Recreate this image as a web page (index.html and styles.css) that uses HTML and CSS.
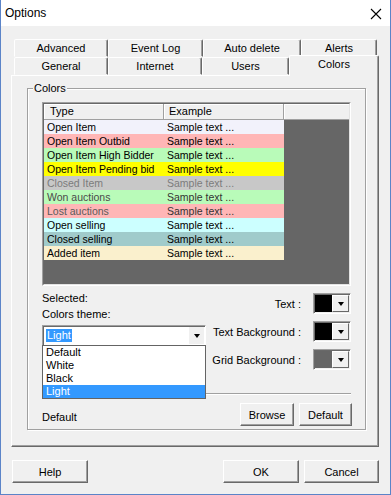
FILE: index.html
```html
<!DOCTYPE html>
<html lang="en">
<head>
  <meta charset="UTF-8">
  <title>Options</title>
  <link rel="stylesheet" href="styles.css">
</head>
<body>
  <div class="window">
    <div class="titlebar">
      <span class="title">Options</span>
      <svg class="close" width="12" height="12" viewBox="0 0 12 12">
        <path d="M1 1 L11 11 M11 1 L1 11" stroke="#000" stroke-width="1.1" fill="none"/>
      </svg>
    </div>

    <div class="content">
      <div class="tabs">
        <div class="tab-row">
          <div class="tab w94">Advanced</div>
          <div class="tab w95">Event Log</div>
          <div class="tab w98">Auto delete</div>
          <div class="tab w76">Alerts</div>
        </div>
        <div class="tab-row">
          <div class="tab w94">General</div>
          <div class="tab w94">Internet</div>
          <div class="tab w87">Users</div>
          <div class="tab active">Colors</div>
        </div>
      </div>

      <div class="panel">
        <div class="group">
          <span class="legend">Colors</span>

          <div class="listview">
            <div class="grid">
              <div class="grid-head">
                <div class="hcell col-type">Type</div>
                <div class="hcell col-example">Example</div>
                <div class="hcell col-fill"></div>
              </div>
              <div class="row r-open"><span class="col-type">Open Item</span><span class="col-example">Sample text ...</span></div>
              <div class="row r-outbid"><span class="col-type">Open Item Outbid</span><span class="col-example">Sample text ...</span></div>
              <div class="row r-high"><span class="col-type">Open Item High Bidder</span><span class="col-example">Sample text ...</span></div>
              <div class="row r-pending"><span class="col-type">Open Item Pending bid</span><span class="col-example">Sample text ...</span></div>
              <div class="row r-closed"><span class="col-type">Closed Item</span><span class="col-example">Sample text ...</span></div>
              <div class="row r-won"><span class="col-type">Won auctions</span><span class="col-example">Sample text ...</span></div>
              <div class="row r-lost"><span class="col-type">Lost auctions</span><span class="col-example">Sample text ...</span></div>
              <div class="row r-selling"><span class="col-type">Open selling</span><span class="col-example">Sample text ...</span></div>
              <div class="row r-sold"><span class="col-type">Closed selling</span><span class="col-example">Sample text ...</span></div>
              <div class="row r-added"><span class="col-type">Added item</span><span class="col-example">Sample text ...</span></div>
            </div>
          </div>

          <div class="settings">
            <div class="theme">
              <div class="label">Selected:</div>
              <div class="label gap">Colors theme:</div>
              <div class="combo">
                <span class="combo-value">Light</span>
                <span class="combo-btn"><span class="arrow"></span></span>
                <div class="dropdown">
                  <div class="opt">Default</div>
                  <div class="opt">White</div>
                  <div class="opt">Black</div>
                  <div class="opt selected">Light</div>
                </div>
              </div>
            </div>
            <div class="pickers">
              <div class="picker">
                <span class="picker-label">Text :</span>
                <span class="swatch"><span class="swatch-color black"></span><span class="swatch-btn"><span class="arrow"></span></span></span>
              </div>
              <div class="picker">
                <span class="picker-label">Text Background :</span>
                <span class="swatch"><span class="swatch-color black"></span><span class="swatch-btn"><span class="arrow"></span></span></span>
              </div>
              <div class="picker">
                <span class="picker-label">Grid Background :</span>
                <span class="swatch"><span class="swatch-color gray"></span><span class="swatch-btn"><span class="arrow"></span></span></span>
              </div>
            </div>
          </div>

          <div class="separator"></div>

          <div class="group-footer">
            <span class="theme-name">Default</span>
            <button class="btn w54">Browse</button>
            <button class="btn w53">Default</button>
          </div>
        </div>
      </div>

      <div class="buttons">
        <button class="btn w76">Help</button>
        <span class="spacer"></span>
        <button class="btn w76">OK</button>
        <button class="btn w75">Cancel</button>
      </div>
    </div>
  </div>
</body>
</html>
```

FILE: styles.css
```css
* {
  box-sizing: border-box;
}
body {
  margin: 0;
  padding: 0;
  background: #ffffff;
  font-family: 'Liberation Sans', Arial, sans-serif;
  font-size: 11px;
  color: #000;
}
.window {
  width: 391px;
  height: 495px;
  border: 1px solid #5b84c8;
  border-top: none;
  background: #f0f0f0;
}
.titlebar {
  height: 26px;
  background: #fff;
  display: flex;
  align-items: center;
  justify-content: space-between;
  padding: 0 8px 0 4px;
}
.title {
  font-size: 12px;
}
.close {
  margin-top: 1px;
}
.content {
  padding: 13px 0 0 10px;
}

/* tabs */
.tabs {
  padding-left: 3px;
}
.tab-row {
  display: flex;
  height: 18px;
}
.tab {
  height: 18px;
  line-height: 16px;
  text-align: center;
  background: #f0f0f0;
  border: 1px solid;
  border-color: #fff #696969 transparent #fff;
  border-radius: 2px 2px 0 0;
  box-shadow: inset -1px 0 #a0a0a0;
}
.tab.active {
  width: 90px;
  height: 21px;
  margin-top: -2px;
  border-bottom: none;
  position: relative;
  z-index: 2;
  line-height: 17px;
}
.w94 { width: 94px; }
.w95 { width: 95px; }
.w98 { width: 98px; }
.w76 { width: 76px; }
.w87 { width: 87px; }
.w75 { width: 75px; }
.w54 { width: 54px; }
.w53 { width: 53px; }

/* panel */
.panel {
  width: 368px;
  height: 372px;
  border: 1px solid;
  border-color: #fff #696969 #696969 #fff;
  box-shadow: inset -1px -1px #a0a0a0;
  padding: 12px 0 0 15px;
}
.group {
  position: relative;
  width: 339px;
  height: 342px;
  border: 1px solid #a0a0a0;
  box-shadow: inset 1px 1px #fff, 1px 1px #fff;
  padding: 13px 0 0 14px;
}
.legend {
  position: absolute;
  top: -7px;
  left: 5px;
  padding: 0 1px;
  line-height: 13px;
  background: #f0f0f0;
}

/* list */
.listview {
  width: 309px;
  height: 184px;
  border: 1px solid;
  border-color: #a0a0a0 #fff #fff #a0a0a0;
}
.grid {
  height: 100%;
  border: 1px solid;
  border-color: #696969 #e3e3e3 #e3e3e3 #696969;
  background: #666666;
}
.grid-head {
  display: flex;
  height: 16px;
  background: #f0f0f0;
}
.hcell {
  height: 16px;
  line-height: 14px;
  padding-left: 6px;
  border-right: 1px solid #a0a0a0;
  border-bottom: 1px solid #a0a0a0;
  box-shadow: inset 1px 1px #fff;
}
.hcell.col-example {
  padding-left: 5px;
}
.hcell.col-fill {
  flex: 1;
  border-right: none;
}
.col-type {
  width: 120px;
}
.col-example {
  width: 120px;
}
.row {
  display: flex;
  width: 240px;
  height: 14px;
  line-height: 14px;
  font-size: 10.5px;
  white-space: nowrap;
}
.row span {
  padding-left: 3px;
  overflow: hidden;
}
.r-open { background: #f2f2fb; }
.r-outbid { background: #ffb6b6; }
.r-high { background: #b9fbb9; }
.r-pending { background: #ffff00; }
.r-closed { background: #c8c8c8; color: #7c7c7c; }
.r-won { background: #b9fbb9; color: #4a4a4a; }
.r-won .col-example { color: #333; }
.r-lost { background: #ffb6b6; color: #5a5a5a; }
.r-lost .col-example { color: #333; }
.r-selling { background: #ccffff; }
.r-sold { background: #a0cbcb; }
.r-added { background: #faf0cd; }

/* settings */
.settings {
  width: 309px;
  display: flex;
  justify-content: space-between;
}
.theme {
  width: 164px;
  padding-top: 6px;
}
.label {
  line-height: 13px;
}
.label.gap {
  margin-top: 3px;
}
.combo {
  position: relative;
  margin-top: 4px;
  height: 21px;
  background: #fff;
  border: 1px solid;
  border-color: #a0a0a0 #fff #fff #a0a0a0;
  box-shadow: inset 1px 1px #696969;
  display: flex;
  align-items: center;
  justify-content: space-between;
  padding: 0 1px 0 3px;
}
.combo-value {
  background: #3399ff;
  color: #fff;
  padding: 0 1px;
  line-height: 13px;
}
.combo-btn {
  width: 15px;
  height: 17px;
  background: #f0f0f0;
  display: flex;
  align-items: center;
  justify-content: center;
}
.arrow {
  width: 0;
  height: 0;
  border-left: 3.5px solid transparent;
  border-right: 3.5px solid transparent;
  border-top: 4px solid #000;
}
.dropdown {
  position: absolute;
  top: 19px;
  left: -1px;
  width: 164px;
  height: 54px;
  background: #fff;
  border: 1px solid #646464;
  z-index: 3;
}
.opt {
  height: 13px;
  line-height: 13px;
  padding-left: 3px;
}
.opt.selected {
  background: #3399ff;
  color: #fff;
}
.pickers {
  padding-top: 7px;
  display: flex;
  flex-direction: column;
  gap: 7px;
}
.picker {
  display: flex;
  align-items: center;
  justify-content: flex-end;
}
.picker-label {
  margin-right: 12px;
}
.swatch {
  width: 38px;
  height: 21px;
  display: flex;
  border: 1px solid;
  border-color: #a0a0a0 #fff #fff #a0a0a0;
  box-shadow: inset 1px 1px #696969;
  padding: 1px;
}
.swatch-color {
  flex: 1;
}
.swatch-color.black { background: #000; }
.swatch-color.gray { background: #666; }
.swatch-btn {
  width: 17px;
  background: #f0f0f0;
  border: 1px solid;
  border-color: #fff #696969 #696969 #fff;
  display: flex;
  align-items: center;
  justify-content: center;
}
.separator {
  width: 309px;
  margin-top: 23px;
  border-top: 1px solid #a0a0a0;
  border-bottom: 1px solid #fff;
}
.group-footer {
  width: 310px;
  margin-top: 8px;
  display: flex;
  align-items: center;
  gap: 5px;
}
.theme-name {
  flex: 1;
  padding-top: 4px;
}

/* buttons */
.btn {
  height: 23px;
  padding: 0;
  font-family: 'Liberation Sans', Arial, sans-serif;
  font-size: 11px;
  color: #000;
  background: #f0f0f0;
  border: 1px solid;
  border-color: #fff #696969 #696969 #fff;
  box-shadow: inset -1px -1px #a0a0a0;
}
.buttons {
  width: 368px;
  margin-top: 13px;
  padding-left: 1px;
  display: flex;
  gap: 5px;
}
.spacer {
  flex: 1;
}
```
